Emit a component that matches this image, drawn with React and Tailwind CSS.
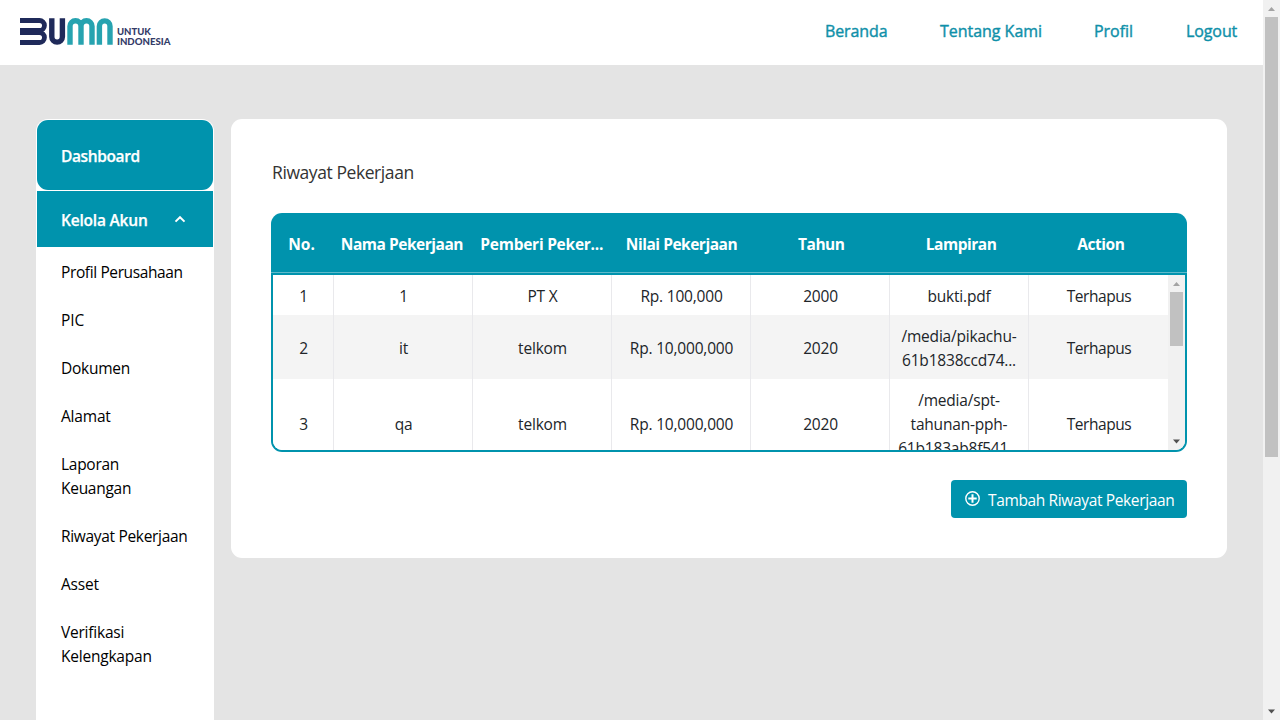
import React from "react";

const menu = [
  { lines: ["Profil Perusahaan"], track: "tracking-[-0.38px]" },
  { lines: ["PIC"], track: "tracking-[-0.1px]" },
  { lines: ["Dokumen"], track: "tracking-[-0.25px]" },
  { lines: ["Alamat"], track: "tracking-[-0.2px]" },
  { lines: ["Laporan", "Keuangan"], track: "tracking-[-0.28px]" },
  { lines: ["Riwayat Pekerjaan"], track: "tracking-[-0.32px]" },
  { lines: ["Asset"], track: "tracking-[-0.2px]" },
  { lines: ["Verifikasi", "Kelengkapan"], track: "tracking-[-0.22px]" },
];

const columns = ["Nama Pekerjaan", "Pemberi Peker...", "Nilai Pekerjaan", "Tahun", "Lampiran", "Action"];

const rows = [
  { h: "h-10", bg: "bg-white", cells: ["1", "1", "PT X", "Rp. 100,000", "2000", ["bukti.pdf"], "Terhapus"] },
  { h: "h-16", bg: "bg-[#f4f4f4]", cells: ["2", "it", "telkom", "Rp. 10,000,000", "2020", ["/media/pikachu-", "61b1838ccd74..."], "Terhapus"] },
  { h: "h-[92px]", bg: "bg-white", cells: ["3", "qa", "telkom", "Rp. 10,000,000", "2020", ["/media/spt-", "tahunan-pph-", "61b183ab8f541..."], "Terhapus"] },
];

function Logo() {
  return (
    <svg className="block shrink-0" width="152" height="30" viewBox="0 0 152 30" fill="none">
      <g stroke="#1f2a5a" strokeWidth="4.8">
        <path d="M0 3.5H19.5a4.9 4.9 0 0 1 0 9.9H0" />
        <path d="M0 15.6H19.5a4.9 4.9 0 0 1 0 9.9H0" />
        <path d="M0 14.5H21.5" strokeWidth="5.5" />
        <path d="M31.8 1.2V19.8a5.3 5.3 0 0 0 10.6 0V1.2" strokeWidth="5.4" />
      </g>
      <g stroke="#27a3b0" strokeWidth="5.4">
        <path d="M50 27.8V9.2a5.5 5.5 0 0 1 11 0V27.8V9.2a5.5 5.5 0 0 1 11 0V27.8" />
        <path d="M79.4 27.8V9.2a5.3 5.3 0 0 1 10.6 0V27.8" />
      </g>
      <text x="97" y="17.6" textLength="34" lengthAdjust="spacingAndGlyphs" fill="#343c68" fontFamily="Lato" fontWeight="900" fontSize="10">UNTUK</text>
      <text x="97" y="27.7" textLength="53.5" lengthAdjust="spacingAndGlyphs" fill="#343c68" fontFamily="Lato" fontWeight="900" fontSize="10">INDONESIA</text>
    </svg>
  );
}

function Arrow({ up, color }) {
  return (
    <svg className="block shrink-0" width="17" height="17" viewBox="0 0 17 17" fill={color}>
      {up ? <path d="M5 11H12L8.5 7z" /> : <path d="M5 6.5H12L8.5 10.5z" />}
    </svg>
  );
}

export default function App() {
  return (
    <div className="flex h-[720px] w-[1280px] overflow-hidden bg-[#e4e4e4] font-['Open_Sans','Noto_Sans',sans-serif] text-[15.5px] leading-6 text-[#212529]">
      <div className="flex w-[1263px] flex-col">
        <header className="flex h-[65px] shrink-0 items-start justify-between bg-white pl-5 pr-[25px]">
          <div className="pt-[17px]"><Logo /></div>
          <nav className="flex gap-[52px] pt-[19px] text-[16px] font-medium text-[#0f90a9] [-webkit-text-stroke:0.4px_#0f90a9]">
            <a className="w-[63px] whitespace-nowrap tracking-[-0.12px]">Beranda</a>
            <a className="w-[102px] whitespace-nowrap tracking-[-0.03px]">Tentang Kami</a>
            <a className="w-[40px] whitespace-nowrap tracking-[-0.03px]">Profil</a>
            <a className="w-[52px] whitespace-nowrap tracking-[-0.1px]">Logout</a>
          </nav>
        </header>

        <div className="flex min-h-0 flex-1 items-start pl-9 pt-[54px]">
          <aside className="flex h-[601px] w-[178px] shrink-0 flex-col rounded-t-[12px] bg-white px-px pt-px">
            <div className="flex h-[70px] shrink-0 items-center rounded-[11px] bg-[#0093ad] pl-6 pt-0.5 text-[15.5px] font-semibold tracking-[-0.38px] text-white [-webkit-text-stroke:0.25px_#fff]">Dashboard</div>
            <div className="mt-px flex h-14 shrink-0 items-center bg-[#0093ad] pl-6 pt-0.5 text-[15.5px] font-semibold text-white">
              <span className="w-[113px] tracking-[-0.2px] [-webkit-text-stroke:0.25px_#fff]">Kelola Akun</span>
              <svg className="-mt-0.5" width="12" height="8" viewBox="0 0 12 8" fill="none" stroke="#fff" strokeWidth="2"><path d="M1.5 6.6L6 2.2L10.5 6.6" /></svg>
            </div>
            <ul className="flex flex-col gap-6 pl-6 pt-[13px] text-black">
              {menu.map((m) => (
                <li key={m.lines[0]} className={`whitespace-nowrap ${m.track}`}>
                  {m.lines.map((l) => <div key={l}>{l}</div>)}
                </li>
              ))}
            </ul>
          </aside>

          <main className="ml-[17px] flex h-[439px] w-[996px] flex-col rounded-[11px] bg-white pl-10 pr-10 pt-10">
            <h1 className="pl-px pt-px text-[17.5px] leading-6 tracking-[-0.42px] text-[#333]">Riwayat Pekerjaan</h1>
            <div className="mt-[29px] flex h-[59px] shrink-0 rounded-t-[11px] bg-[#0093ad] pt-[19px] text-center text-[15.5px] font-bold text-white">
              <div className="w-[61px]">No.</div>
              {columns.map((c) => (
                <div key={c} className={`w-[139.8px] whitespace-nowrap ${c.startsWith("Pemberi") ? "tracking-[-0.25px]" : "tracking-[-0.48px]"}`}>{c}</div>
              ))}
            </div>
            <div className="h-px shrink-0 bg-[#5fb9ca]" />
            <div className="h-[179px] shrink-0 rounded-b-[11px] border-2 border-[#0093ad] bg-white">
              <div className="flex h-full overflow-hidden rounded-b-[9px]">
                <div className="w-[895px]">
                  {rows.map((r, i) => (
                    <div key={i} className={`flex ${r.h} ${r.bg}`}>
                      {r.cells.map((c, j) => (
                        <div
                          key={j}
                          className={`flex flex-col items-center whitespace-nowrap ${j === 6 ? "tracking-[-0.45px]" : "tracking-[-0.2px]"} ${Array.isArray(c) && c.length > 2 ? "pt-[9px]" : i === 2 ? "pt-[33px]" : "justify-center pt-px"} ${j === 0 ? "w-[61px] pl-px" : j === 5 ? "w-[139px]" : "w-[139px] pl-px"} ${j < 6 ? "border-r border-[#e9e9ec]" : ""}`}
                        >
                          {Array.isArray(c) ? c.map((l) => <div key={l} className="h-6">{l}</div>) : c}
                        </div>
                      ))}
                    </div>
                  ))}
                </div>
                <div className="flex w-[17px] flex-col bg-[#f1f1f1]">
                  <Arrow up color="#a3a3a3" />
                  <div className="mx-[2px] h-[54px] bg-[#c1c1c1]" />
                  <div className="flex-1" />
                  <Arrow color="#505050" />
                </div>
              </div>
            </div>
            <button className="mt-[28px] flex h-[38px] w-[236px] shrink-0 items-center self-end rounded-[4px] bg-[#0093ad] pl-[14px] text-white">
              <svg className="-mt-px" width="15" height="15" viewBox="0 0 15 15" fill="none" stroke="#fff" strokeWidth="1.4"><circle cx="7.5" cy="7.5" r="6.7" /><path d="M7.5 3.3v8.4M3.3 7.5h8.4" strokeWidth="2" /></svg>
              <span className="ml-2 whitespace-nowrap pt-[2px] tracking-[-0.36px]">Tambah Riwayat Pekerjaan</span>
            </button>
          </main>
        </div>
      </div>

      <div className="flex w-[17px] flex-col bg-[#f1f1f1]">
        <Arrow up color="#a3a3a3" />
        <div className="mx-[2px] h-[440px] bg-[#c1c1c1]" />
        <div className="flex-1" />
        <Arrow color="#505050" />
      </div>
    </div>
  );
}
